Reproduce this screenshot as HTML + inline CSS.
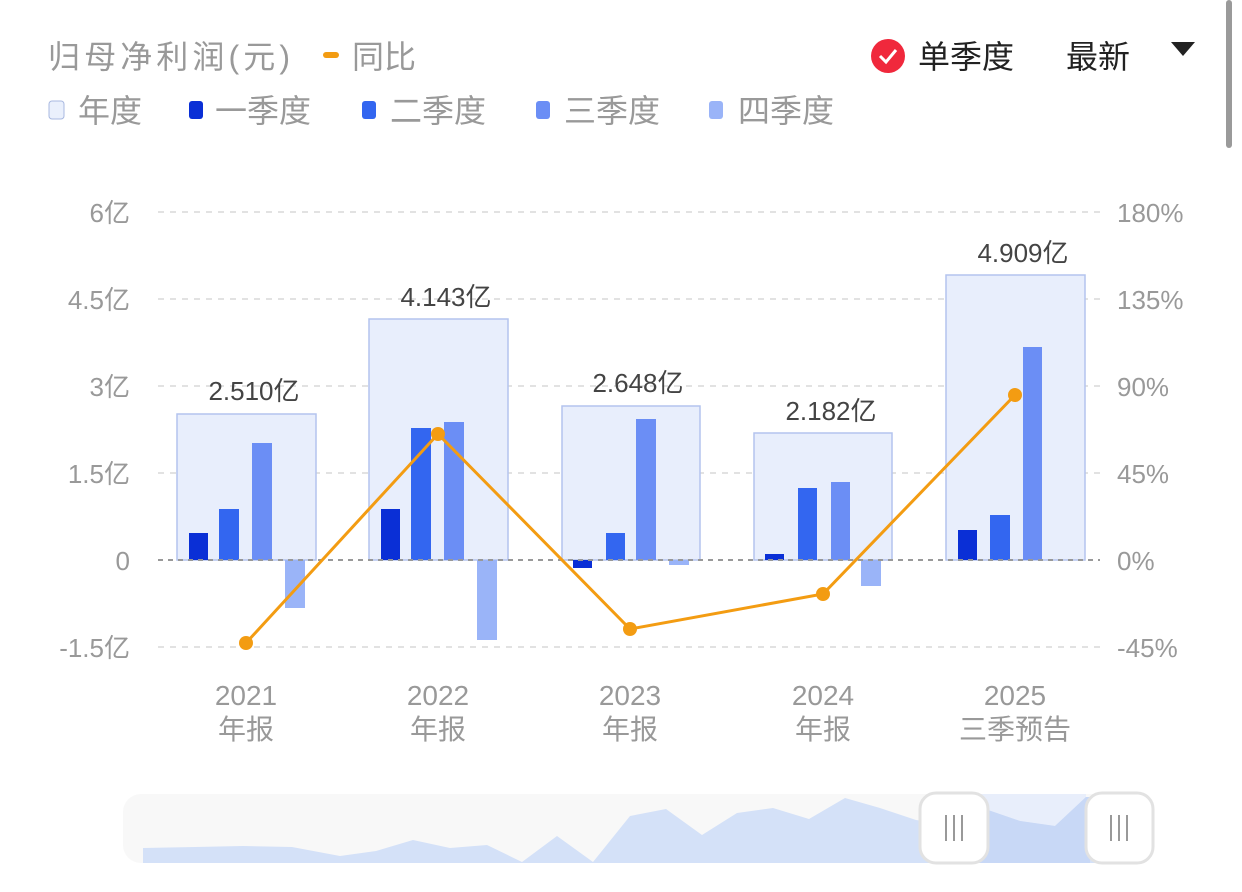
<!DOCTYPE html>
<html><head><meta charset="utf-8"><style>
body{margin:0;width:1242px;height:892px;background:#fff;overflow:hidden;font-family:"Liberation Sans","Noto Sans CJK SC",sans-serif;}
</style></head><body>
<svg width="1242" height="892" xmlns="http://www.w3.org/2000/svg" style="position:absolute;left:0;top:0;font-family:'Liberation Sans','Noto Sans CJK SC',sans-serif">
<rect x="1226" y="0" width="6" height="148" rx="3" fill="#9a9a9a"/>
<text x="48" y="68" font-size="32" fill="#999" textLength="242">归母净利润(元)</text>
<rect x="323" y="52" width="16" height="6" rx="3" fill="#f39c12"/>
<text x="352" y="68" font-size="32" fill="#999">同比</text>
<circle cx="888" cy="56" r="17" fill="#f0283c"/>
<path d="M880 56 l6 6 l10 -12" stroke="#fff" stroke-width="3" fill="none"/>
<text x="918" y="68" font-size="32" fill="#222">单季度</text>
<text x="1066" y="68" font-size="32" fill="#222">最新</text>
<path d="M1171 42 h24 l-12 14z" fill="#222"/>
<g font-size="32" fill="#999">
<rect x="49" y="101" width="15" height="18" rx="3" fill="#eaf0fc" stroke="#a8b8e0"/><text x="78" y="122">年度</text>
<rect x="189" y="101" width="14" height="18" rx="3" fill="#0a2fd6"/><text x="215" y="122">一季度</text>
<rect x="362" y="101" width="14" height="18" rx="3" fill="#3366f0"/><text x="390" y="122">二季度</text>
<rect x="536" y="101" width="14" height="18" rx="3" fill="#6b8ef5"/><text x="564" y="122">三季度</text>
<rect x="709" y="101" width="14" height="18" rx="3" fill="#9ab4f8"/><text x="738" y="122">四季度</text>
</g>
<g stroke="#e2e2e2" stroke-width="2" stroke-dasharray="6,6">
<line x1="158" y1="212" x2="1100" y2="212"/><line x1="158" y1="299" x2="1100" y2="299"/>
<line x1="158" y1="386" x2="1100" y2="386"/><line x1="158" y1="473" x2="1100" y2="473"/>
<line x1="158" y1="647" x2="1100" y2="647"/>
</g>
<g font-size="26" fill="#999" text-anchor="end">
<text x="130" y="222">6亿</text><text x="130" y="309">4.5亿</text><text x="130" y="396">3亿</text>
<text x="130" y="483">1.5亿</text><text x="130" y="570">0</text><text x="130" y="657">-1.5亿</text>
</g>
<g font-size="26" fill="#999">
<text x="1117" y="222">180%</text><text x="1117" y="309">135%</text><text x="1117" y="396">90%</text>
<text x="1117" y="483">45%</text><text x="1117" y="570">0%</text><text x="1117" y="657">-45%</text>
</g>
<g fill="#e8eefc" stroke="#b4c4ee" stroke-width="1.5">
<rect x="177" y="414" width="139" height="146"/><rect x="369" y="319" width="139" height="241"/>
<rect x="562" y="406" width="138" height="154"/><rect x="754" y="433" width="138" height="127"/>
<rect x="946" y="275" width="139" height="285"/>
</g>
<g>
<rect x="189" y="533" width="19" height="27" fill="#0a2fd6"/><rect x="219" y="509" width="20" height="51" fill="#3366f0"/><rect x="252" y="443" width="20" height="117" fill="#6b8ef5"/><rect x="285" y="560" width="20" height="48" fill="#9ab4f8"/>
<rect x="381" y="509" width="19" height="51" fill="#0a2fd6"/><rect x="411" y="428" width="20" height="132" fill="#3366f0"/><rect x="444" y="422" width="20" height="138" fill="#6b8ef5"/><rect x="477" y="560" width="20" height="80" fill="#9ab4f8"/>
<rect x="573" y="560" width="19" height="8" fill="#0a2fd6"/><rect x="606" y="533" width="19" height="27" fill="#3366f0"/><rect x="636" y="419" width="20" height="141" fill="#6b8ef5"/><rect x="669" y="560" width="20" height="5" fill="#9ab4f8"/>
<rect x="765" y="554" width="19" height="6" fill="#0a2fd6"/><rect x="798" y="488" width="19" height="72" fill="#3366f0"/><rect x="831" y="482" width="19" height="78" fill="#6b8ef5"/><rect x="861" y="560" width="20" height="26" fill="#9ab4f8"/>
<rect x="958" y="530" width="19" height="30" fill="#0a2fd6"/><rect x="990" y="515" width="20" height="45" fill="#3366f0"/><rect x="1023" y="347" width="19" height="213" fill="#6b8ef5"/>
</g>
<line x1="158" y1="560" x2="1100" y2="560" stroke="#999" stroke-width="2" stroke-dasharray="5,5"/>
<polyline points="246,643 438,434 630,629 823,594 1015,395" fill="none" stroke="#f39c12" stroke-width="3"/>
<g fill="#f39c12"><circle cx="246" cy="643" r="7"/><circle cx="438" cy="434" r="7"/><circle cx="630" cy="629" r="7"/><circle cx="823" cy="594" r="7"/><circle cx="1015" cy="395" r="7"/></g>
<g font-size="26" fill="#444" text-anchor="middle">
<text x="254" y="400">2.510亿</text><text x="446" y="306">4.143亿</text><text x="638" y="392">2.648亿</text><text x="831" y="420">2.182亿</text><text x="1023" y="262">4.909亿</text>
</g>
<g font-size="28" fill="#999" text-anchor="middle">
<text x="246" y="705">2021</text><text x="246" y="739">年报</text>
<text x="438" y="705">2022</text><text x="438" y="739">年报</text>
<text x="630" y="705">2023</text><text x="630" y="739">年报</text>
<text x="823" y="705">2024</text><text x="823" y="739">年报</text>
<text x="1015" y="705">2025</text><text x="1015" y="739">三季预告</text>
</g>
<rect x="123" y="794" width="1031" height="69" rx="18" fill="#f8f8f8"/>
<rect x="954" y="794" width="132" height="69" fill="#e8eefb"/>
<polygon points="143,848 195,847 243,846 292,847 340,856 376,851 413,840 450,848 487,845 522,862 557,836 593,862 630,816 666,809 702,835 737,813 773,808 809,819 845,798 880,808 916,820 955,826 988,810 1020,821 1055,826 1086,797 1100,797 1100,863 143,863" fill="#d4e1f8"/>
<polygon points="955,826 988,810 1020,821 1055,826 1086,797 1090,797 1090,863 955,863" fill="#c8d8f6"/>
<rect x="920" y="793" width="68" height="70" rx="16" fill="#fff" stroke="#e2e2e2" stroke-width="3"/>
<g stroke="#999" stroke-width="2"><line x1="946" y1="815" x2="946" y2="841"/><line x1="954" y1="815" x2="954" y2="841"/><line x1="962" y1="815" x2="962" y2="841"/></g>
<rect x="1086" y="793" width="67" height="70" rx="16" fill="#fff" stroke="#e2e2e2" stroke-width="3"/>
<g stroke="#999" stroke-width="2"><line x1="1111" y1="815" x2="1111" y2="841"/><line x1="1119" y1="815" x2="1119" y2="841"/><line x1="1127" y1="815" x2="1127" y2="841"/></g>
</svg>
</body></html>
